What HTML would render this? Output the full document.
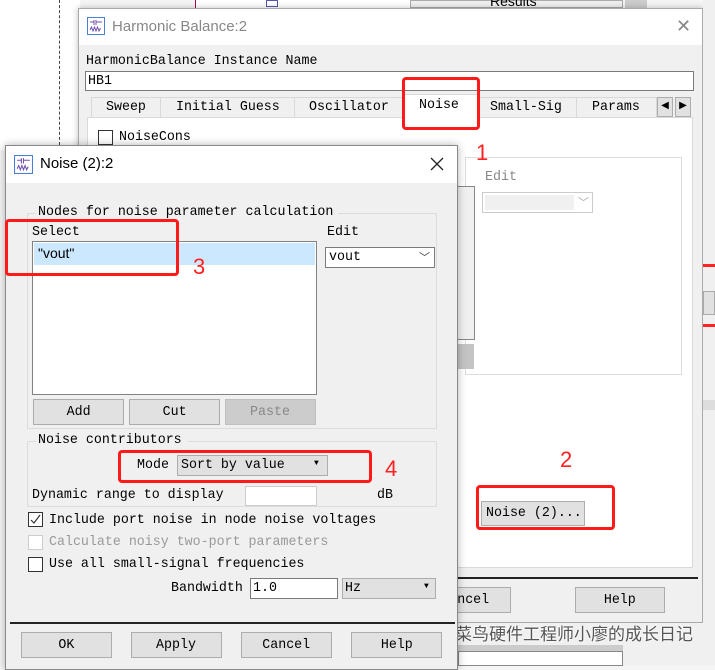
<!DOCTYPE html>
<html><head><meta charset="utf-8"><style>
*{margin:0;padding:0;box-sizing:border-box}
body{width:715px;height:666px;position:relative;overflow:hidden;background:#f5f5f5;font-family:"Liberation Mono",monospace;font-size:14px;color:#000}
.a{position:absolute}
.m{font-family:"Liberation Mono",monospace;font-size:14px;letter-spacing:0;white-space:nowrap;transform:scaleX(.95);transform-origin:0 0}
.t{display:inline-block;font-family:"Liberation Mono",monospace;font-size:14px;white-space:nowrap;transform:scaleX(.95)}
.btn{position:absolute;background:#e1e1e1;border:1px solid #adadad;text-align:center;overflow:hidden;white-space:nowrap}
.red{position:absolute;border:3px solid #ff1a1a;border-radius:4px}
.rn{position:absolute;color:#ff2020;font-family:"Liberation Sans",sans-serif;font-size:22px}
.cb{position:absolute;width:15px;height:15px;border:1px solid #333;background:#fff}
.ln{position:absolute;border:1px solid #dcdcdc}
</style></head><body>
<div class="a" style="left:0;top:0;width:80px;height:150px;background:#fff"></div>
<div class="a" style="left:59px;top:0;height:145px;border-left:1px dashed #444"></div>
<div class="a" style="left:195px;top:0;width:215px;height:8px;background:#fff;border-left:1px solid #a05"></div>
<div class="a" style="left:266px;top:0;width:12px;height:7px;border:1px solid #55a"></div>
<div class="a" style="left:410px;top:0;width:213px;height:8px;background:#f0f0f0;border:1px solid #aaa"></div>
<div class="a" style="left:490px;top:-7px;font-family:'Liberation Sans';font-size:14px">Results</div>
<div class="a" style="left:625px;top:0;width:22px;height:10px;background:#ccc"></div>
<!-- back dialog -->
<div class="a" style="left:78px;top:8px;width:625px;height:615px;background:#f0f0f0;border:1px solid #aaa;box-shadow:0 0 6px rgba(0,0,0,.25)"></div>
<div class="a" style="left:79px;top:9px;width:623px;height:36px;background:#fff"></div>
<svg class="a" style="left:87px;top:17px" width="18" height="18" viewBox="0 0 18 18"><rect x="0.5" y="0.5" width="17" height="17" fill="#fff" stroke="#4a7ed8"/><path d="M3 5h4M7 3v5M9 3v5M9 5h6M3 13l1.5-3 1.5 4 1.5-4 1.5 4 1.5-4 1.5 4 1.5-3" stroke="#7050b0" fill="none"/></svg>
<div class="a" style="left:112px;top:18px;font-family:'Liberation Sans';font-size:15px;color:#888">Harmonic Balance:2</div>
<div class="a" style="left:676px;top:16px;font-family:'Liberation Sans';font-size:18px;color:#888">✕</div>
<div class="a m" style="left:86px;top:53px">HarmonicBalance Instance Name</div>
<div class="a" style="left:85px;top:71px;width:609px;height:20px;background:#fff;border:1px solid #7a7a7a"></div>
<div class="a m" style="left:88px;top:73px">HB1</div>
<div class="a" style="left:87px;top:117px;width:606px;height:451px;background:#fff;border:1px solid #d9d9d9"></div>
<div class="a" style="left:91px;top:97px;width:566px;height:20px;background:#f0f0f0;border:1px solid #d9d9d9;border-bottom:none"></div>
<div class="a m" style="left:106px;top:99px">Sweep</div>
<div class="a" style="left:160px;top:97px;height:20px;border-left:1px solid #d9d9d9"></div>
<div class="a m" style="left:176px;top:99px">Initial Guess</div>
<div class="a" style="left:294px;top:97px;height:20px;border-left:1px solid #d9d9d9"></div>
<div class="a m" style="left:309px;top:99px">Oscillator</div>
<div class="a" style="left:402px;top:94px;width:76px;height:24px;background:#fff;border:1px solid #d9d9d9;border-bottom:none"></div>
<div class="a m" style="left:419px;top:97px">Noise</div>
<div class="a m" style="left:490px;top:99px">Small-Sig</div>
<div class="a" style="left:576px;top:97px;height:20px;border-left:1px solid #d9d9d9"></div>
<div class="a m" style="left:592px;top:99px">Params</div>
<div class="a" style="left:657px;top:97px;width:16px;height:20px;background:#e1e1e1;border:1px solid #adadad;font-size:10px;text-align:center;line-height:18px">◀</div>
<div class="a" style="left:675px;top:97px;width:16px;height:20px;background:#e1e1e1;border:1px solid #adadad;font-size:10px;text-align:center;line-height:18px">▶</div>
<div class="cb" style="left:98px;top:130px"></div>
<div class="a m" style="left:119px;top:129px">NoiseCons</div>
<div class="ln" style="left:465px;top:157px;width:217px;height:218px"></div>
<div class="a m" style="left:485px;top:169px;color:#888">Edit</div>
<div class="a" style="left:482px;top:192px;width:111px;height:21px;border:1px solid #ccc;background:#fff"></div>
<div class="a" style="left:485px;top:195px;width:89px;height:15px;background:#f0f0f0"></div>
<div class="a" style="left:578px;top:194px;color:#aaa;font-size:11px">﹀</div>
<div class="a" style="left:456px;top:186px;width:19px;height:154px;border:1px solid #888;border-left:none;background:#f0f0f0"></div>
<div class="a" style="left:456px;top:344px;width:18px;height:25px;background:#c4c4c4"></div>
<div class="btn" style="left:481px;top:501px;width:104px;height:25px;line-height:23px;text-align:left;padding-left:4px"><span class="t" style="transform-origin:0 0">Noise (2)...</span></div>
<div class="a" style="left:455px;top:577px;width:243px;border-top:2px solid #222"></div>
<div class="btn" style="left:420px;top:587px;width:91px;height:26px;line-height:24px"><span class="t">Cancel</span></div>
<div class="btn" style="left:575px;top:587px;width:90px;height:26px;line-height:24px"><span class="t">Help</span></div>
<div class="a" style="left:703px;top:0;width:12px;height:666px;background:#f0f0f0"></div>
<div class="a" style="left:703px;top:264px;width:12px;height:3px;background:#f22"></div>
<div class="a" style="left:703px;top:324px;width:12px;height:3px;background:#f22"></div>
<div class="a" style="left:703px;top:291px;width:12px;height:24px;background:#e1e1e1;border:1px solid #aaa"></div>
<div class="a" style="left:703px;top:400px;width:12px;height:10px;background:#ddd"></div>
<div class="a" style="left:457px;top:623px;width:246px;height:43px;background:#f0f0f0"></div>
<div class="a" style="left:457px;top:645px;width:166px;height:6px;background:#ccc"></div>
<div class="a" style="left:458px;top:651px;width:165px;height:15px;background:#fff;border:1px solid #888"></div>
<div class="a" style="left:455px;top:620px;font-family:'Liberation Sans','Noto Sans CJK SC',sans-serif;font-size:17px;color:#555;text-shadow:0 0 2px #fff,0 0 2px #fff">菜鸟硬件工程师小廖的成长日记</div>
<div class="a" style="left:426px;top:624px;width:26px;height:20px;border-radius:50%;border:2px solid #bbb;background:#fff"></div>
<!-- front dialog -->
<div class="a" style="left:5px;top:145px;width:453px;height:525px;background:#f0f0f0;border:1px solid #888;box-shadow:0 0 8px rgba(0,0,0,.3)"></div>
<div class="a" style="left:6px;top:146px;width:451px;height:37px;background:#fff"></div>
<svg class="a" style="left:14px;top:155px" width="19" height="19" viewBox="0 0 18 18"><rect x="0.5" y="0.5" width="17" height="17" fill="#fff" stroke="#4a7ed8"/><path d="M3 5h4M7 3v5M9 3v5M9 5h6M3 13l1.5-3 1.5 4 1.5-4 1.5 4 1.5-4 1.5 4 1.5-3" stroke="#7050b0" fill="none"/></svg>
<div class="a" style="left:40px;top:155px;font-family:'Liberation Sans';font-size:15px">Noise (2):2</div>
<svg class="a" style="left:430px;top:157px" width="14" height="14"><path d="M1 1L13 13M13 1L1 13" stroke="#222" stroke-width="1.3"/></svg>
<div class="ln" style="left:27px;top:213px;width:410px;height:216px"></div>
<div class="a" style="left:36px;top:211px;width:302px;height:5px;background:#f0f0f0"></div>
<div class="a m" style="left:38px;top:204px">Nodes for noise parameter calculation</div>
<div class="a m" style="left:32px;top:224px">Select</div>
<div class="a" style="left:32px;top:241px;width:285px;height:154px;background:#fff;border:1px solid #828282"></div>
<div class="a" style="left:34px;top:243px;width:281px;height:22px;background:#cce8ff"></div>
<div class="a" style="left:38px;top:245px;font-family:'Liberation Sans';font-size:14px">"vout"</div>
<div class="a m" style="left:327px;top:224px">Edit</div>
<div class="a" style="left:325px;top:247px;width:110px;height:21px;background:#fff;border:1px solid #7a7a7a"></div>
<div class="a m" style="left:329px;top:249px">vout</div>
<div class="a" style="left:419px;top:249px;font-size:11px;color:#444">﹀</div>
<div class="btn" style="left:33px;top:399px;width:91px;height:26px;line-height:24px"><span class="t">Add</span></div>
<div class="btn" style="left:129px;top:399px;width:91px;height:26px;line-height:24px"><span class="t">Cut</span></div>
<div class="btn" style="left:225px;top:399px;width:91px;height:26px;line-height:24px;background:#ccc;border-color:#bfbfbf;color:#888"><span class="t">Paste</span></div>
<div class="ln" style="left:27px;top:441px;width:410px;height:66px"></div>
<div class="a" style="left:36px;top:439px;width:152px;height:5px;background:#f0f0f0"></div>
<div class="a m" style="left:38px;top:432px">Noise contributors</div>
<div class="a m" style="left:137px;top:457px">Mode</div>
<div class="a" style="left:177px;top:455px;width:151px;height:21px;background:#e1e1e1;border:1px solid #adadad"></div>
<div class="a m" style="left:181px;top:457px">Sort by value</div>
<div class="a" style="left:314px;top:459px;font-size:8px">▼</div>
<div class="a m" style="left:32px;top:487px">Dynamic range to display</div>
<div class="a" style="left:245px;top:486px;width:72px;height:20px;background:#fff;border:1px solid #ccc"></div>
<div class="a m" style="left:377px;top:487px">dB</div>
<div class="cb" style="left:28px;top:512px"><svg width="13" height="13" style="position:absolute;left:0;top:0"><path d="M2 7l3 3 6-8" stroke="#333" stroke-width="1.2" fill="none"/></svg></div>
<div class="a m" style="left:49px;top:512px">Include port noise in node noise voltages</div>
<div class="cb" style="left:28px;top:535px;border-color:#ccc"></div>
<div class="a m" style="left:49px;top:534px;color:#999">Calculate noisy two-port parameters</div>
<div class="cb" style="left:28px;top:557px"></div>
<div class="a m" style="left:49px;top:556px">Use all small-signal frequencies</div>
<div class="a m" style="left:171px;top:580px">Bandwidth</div>
<div class="a" style="left:250px;top:578px;width:88px;height:21px;background:#fff;border:1px solid #7a7a7a"></div>
<div class="a m" style="left:253px;top:580px">1.0</div>
<div class="a" style="left:342px;top:578px;width:94px;height:21px;background:#e1e1e1;border:1px solid #adadad"></div>
<div class="a m" style="left:345px;top:580px">Hz</div>
<div class="a" style="left:424px;top:582px;font-size:8px">▼</div>
<div class="a" style="left:10px;top:622px;width:445px;border-top:2px solid #222"></div>
<div class="btn" style="left:21px;top:632px;width:91px;height:26px;line-height:24px"><span class="t">OK</span></div>
<div class="btn" style="left:131px;top:632px;width:91px;height:26px;line-height:24px"><span class="t">Apply</span></div>
<div class="btn" style="left:241px;top:632px;width:91px;height:26px;line-height:24px"><span class="t">Cancel</span></div>
<div class="btn" style="left:351px;top:632px;width:91px;height:26px;line-height:24px"><span class="t">Help</span></div>
<div class="red" style="left:402px;top:77px;width:78px;height:53px"></div>
<div class="rn" style="left:476px;top:140px">1</div>
<div class="red" style="left:476px;top:485px;width:139px;height:45px"></div>
<div class="rn" style="left:560px;top:447px">2</div>
<div class="red" style="left:5px;top:219px;width:174px;height:57px"></div>
<div class="rn" style="left:193px;top:254px">3</div>
<div class="red" style="left:118px;top:450px;width:254px;height:33px"></div>
<div class="rn" style="left:385px;top:456px">4</div>
</body></html>
